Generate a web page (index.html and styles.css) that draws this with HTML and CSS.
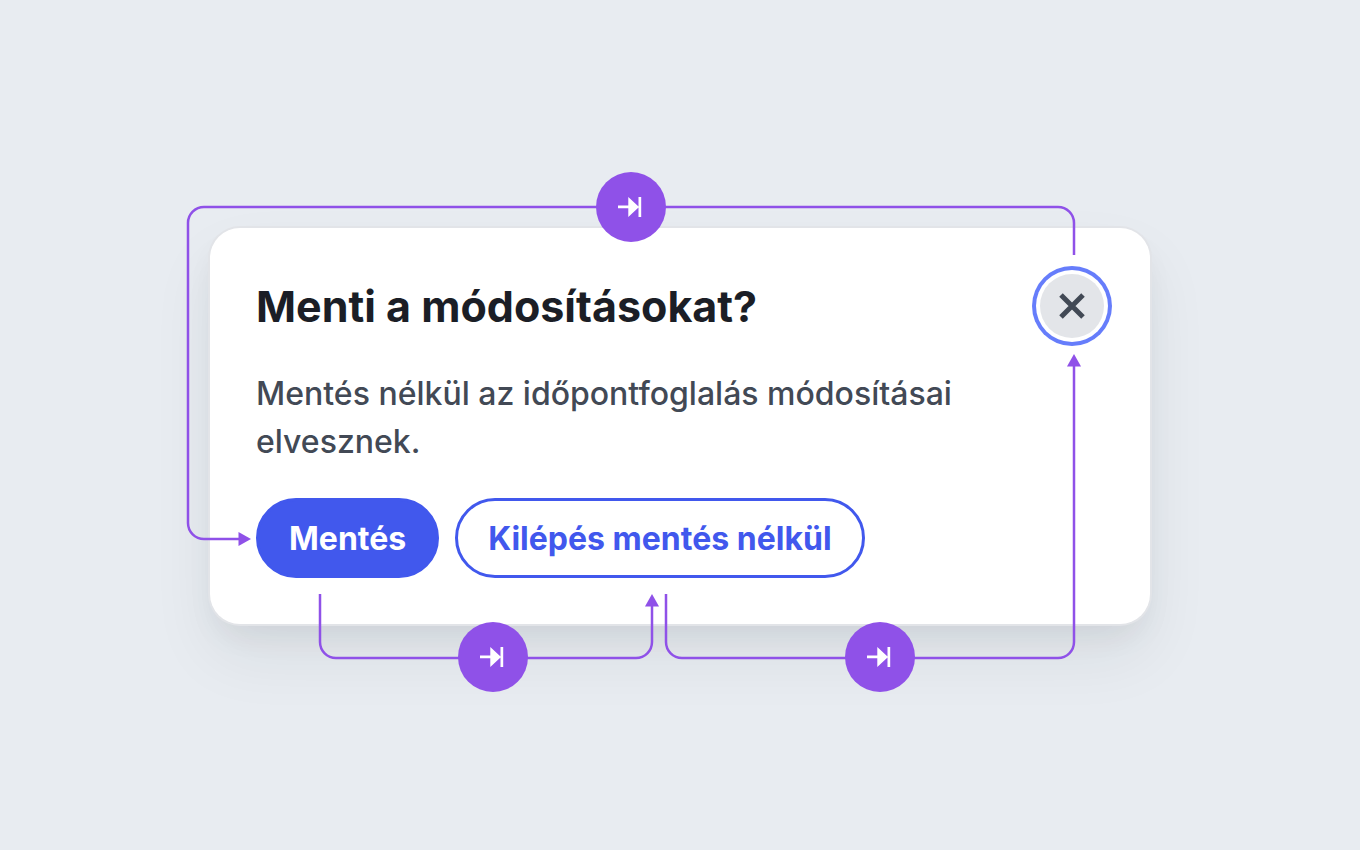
FILE: index.html
```
<!DOCTYPE html>
<html lang="hu">
<head>
    <meta charset="UTF-8">
    <meta name="viewport" content="width=device-width, initial-scale=1.0">
    <title>Menti a módosításokat?</title>
    <link rel="stylesheet" href="styles.css">
</head>
<body>

    <main class="stage">
        <section class="dialog" role="dialog" aria-labelledby="dialog-title" aria-describedby="dialog-text">
            <header class="dialog-header">
                <h1 id="dialog-title">Menti a módosításokat?</h1>
                <button type="button" class="close" aria-label="Bezárás">
                    <svg width="28" height="28" viewBox="0 0 28 28" aria-hidden="true">
                        <path d="M3 3L25 25M25 3L3 25"/>
                    </svg>
                </button>
            </header>

            <p id="dialog-text" class="dialog-text">Mentés nélkül az időpontfoglalás módosításai elvesznek.</p>

            <div class="actions">
                <button type="button" class="btn btn-primary">Mentés</button>
                <button type="button" class="btn btn-outline">Kilépés mentés nélkül</button>
            </div>

            <!-- Tab order arrows -->
            <svg class="tab-flow" viewBox="0 0 940 396" aria-hidden="true">
                <defs>
                    <g id="tab-key">
                        <circle r="35"/>
                        <path class="glyph" d="M-13 -1.5H-2.7V-10L7.5 -0.4V-10H10.2V10H7.5V0.4L-2.7 10V1.2H-13Z"/>
                    </g>
                </defs>

                <!-- Close to save -->
                <path class="line" d="M864 27V-5A16 16 0 0 0 848 -21H-6A16 16 0 0 0 -22 -5V295A16 16 0 0 0 -6 311H29"/>
                <path class="tip" d="M28.5 304L41 311L28.5 318Z"/>

                <!-- Save to exit -->
                <path class="line" d="M110 366V414A16 16 0 0 0 126 430H426A16 16 0 0 0 442 414V378"/>
                <path class="tip" d="M435 378.5L442 366L449 378.5Z"/>

                <!-- Exit to close -->
                <path class="line" d="M456 366V414A16 16 0 0 0 472 430H848A16 16 0 0 0 864 414V138"/>
                <path class="tip" d="M857 138.5L864 126L871 138.5Z"/>

                <use href="#tab-key" x="421" y="-21"/>
                <use href="#tab-key" x="283" y="429"/>
                <use href="#tab-key" x="670" y="429"/>
            </svg>
        </section>
    </main>

</body>
</html>
```
FILE: styles.css
```
* {
    box-sizing: border-box;
}

body {
    margin: 0;
    background-color: #e8ecf1;
    font-family: Inter, "Liberation Sans", sans-serif;
}

.stage {
    display: flex;
    justify-content: center;
    align-items: center;
    min-height: 100vh;
    padding: 26px 24px 24px;
}

.dialog {
    position: relative;
    width: 100%;
    max-width: 940px;
    padding: 46px;
    background-color: #fff;
    border-radius: 30px;
    box-shadow: 0 0 0 2px #e2e4e8, 0 32px 64px rgba(30, 36, 48, 0.07), 0 16px 32px -8px rgba(30, 36, 48, 0.08);
}

.dialog-header {
    display: flex;
    justify-content: space-between;
    align-items: center;
}

.dialog-header h1 {
    margin: 0;
    color: #1b1e26;
    font-size: 43px;
    line-height: 56px;
    font-weight: 700;
}

.close {
    display: flex;
    justify-content: center;
    align-items: center;
    width: 64px;
    height: 64px;
    padding: 0;
    border: none;
    border-radius: 50%;
    background-color: #e3e5e9;
    box-shadow: 0 0 0 4px #fff, 0 0 0 8px #667dfb;
    cursor: pointer;
}

.close path {
    fill: none;
    stroke: #424955;
    stroke-width: 5;
}

.dialog-text {
    max-width: 760px;
    margin: 32px 0;
    color: #424955;
    font-size: 32px;
    line-height: 48px;
    font-weight: 500;
}

.actions {
    display: flex;
    flex-wrap: wrap;
    gap: 16px;
}

.btn {
    height: 80px;
    padding: 0 30px;
    border: 3px solid #4158ed;
    border-radius: 40px;
    font-family: inherit;
    font-size: 32px;
    font-weight: 700;
    cursor: pointer;
}

.btn-primary {
    background-color: #4158ed;
    color: #fff;
}

.btn-outline {
    background-color: #fff;
    color: #4158ed;
}

.tab-flow {
    position: absolute;
    top: 0;
    left: 0;
    width: 100%;
    overflow: visible;
    fill: #8f51e8;
    pointer-events: none;
}

.tab-flow .line {
    fill: none;
    stroke: #8f51e8;
    stroke-width: 2.5;
}

.tab-flow .glyph {
    fill: #fff;
}
```
